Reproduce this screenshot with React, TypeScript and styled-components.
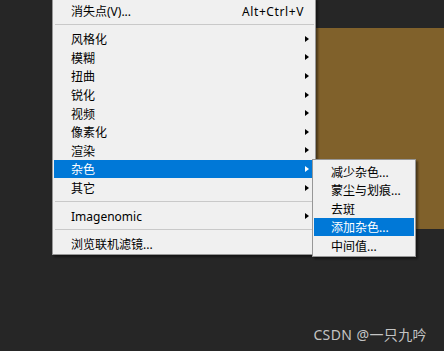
import React from "react";
import styled, { createGlobalStyle } from "styled-components";

const Global = createGlobalStyle`
  html, body { margin: 0; padding: 0; background: #262626; }
  body { width: 444px; height: 351px; overflow: hidden; }
`;

const Stage = styled.div`
  position: relative;
  width: 444px;
  height: 351px;
  background: #262626;
  overflow: hidden;
  font-family: "Noto Sans", "Noto Sans CJK SC", sans-serif;
  font-size: 12px;
  color: #000;
`;

const Canvas = styled.div`
  position: absolute;
  left: 316px;
  top: 28px;
  width: 128px;
  height: 201px;
  background: #80612b;
`;

const Menu = styled.div<{ $left: number; $top: number; $width: number; $z: number; $padTop: number }>`
  position: absolute;
  left: ${(p) => p.$left}px;
  top: ${(p) => p.$top}px;
  width: ${(p) => p.$width}px;
  box-sizing: border-box;
  background: #f0f0f0;
  border: 1px solid #979797;
  padding: ${(p) => p.$padTop}px 1px 1px;
  box-shadow: 2px 2px 2px rgba(0, 0, 0, 0.45);
  z-index: ${(p) => p.$z};
  display: flex;
  flex-direction: column;
`;

const Row = styled.div<{ $active?: boolean }>`
  box-sizing: border-box;
  height: 18.6px;
  display: flex;
  align-items: center;
  padding: 3px 5px 0 17px;
  background: ${(p) => (p.$active ? "#0078d7" : "transparent")};
  color: ${(p) => (p.$active ? "#fff" : "#000")};
  white-space: nowrap;
  line-height: 1;
`;

const Label = styled.span`
  flex: 1;
`;

const Shortcut = styled.span`
  margin-right: 5px;
  letter-spacing: 0.6px;
`;

const Arrow = styled.span<{ $active?: boolean }>`
  width: 0;
  height: 0;
  margin-top: -3px;
  border-top: 3.5px solid transparent;
  border-bottom: 3.5px solid transparent;
  border-left: 4px solid ${(p) => (p.$active ? "#fff" : "#000")};
`;

const Separator = styled.div`
  height: 1px;
  margin: 4px 0 4.5px 1px;
  background: #c9c9c9;
`;

const Watermark = styled.div`
  position: absolute;
  right: 17px;
  top: 325px;
  font-size: 14px;
  line-height: 20px;
  letter-spacing: 0.4px;
  color: #c4c4c4;
  font-family: "Noto Sans", "Noto Sans CJK SC", sans-serif;
  white-space: nowrap;
`;

const subItems = ["风格化", "模糊", "扭曲", "锐化", "视频", "像素化", "渲染", "杂色", "其它"];
const noiseItems = ["减少杂色...", "蒙尘与划痕...", "去斑", "添加杂色...", "中间值..."];

export default function App() {
  return (
    <Stage>
      <Global />
      <Canvas />
      <Menu $left={52} $top={-2} $width={264} $z={1} $padTop={2.4}>
        <Row>
          <Label>消失点(V)...</Label>
          <Shortcut>Alt+Ctrl+V</Shortcut>
        </Row>
        <Separator />
        {subItems.map((t) => (
          <Row key={t} $active={t === "杂色"}>
            <Label>{t}</Label>
            <Arrow $active={t === "杂色"} />
          </Row>
        ))}
        <Separator />
        <Row>
          <Label>Imagenomic</Label>
          <Arrow />
        </Row>
        <Separator />
        <Row>
          <Label>浏览联机滤镜...</Label>
        </Row>
      </Menu>
      <Menu $left={312} $top={159} $width={104} $z={2} $padTop={1.8}>
        {noiseItems.map((t) => (
          <Row key={t} $active={t === "添加杂色..."}>
            <Label>{t}</Label>
          </Row>
        ))}
      </Menu>
      <Watermark>CSDN @一只九吟</Watermark>
    </Stage>
  );
}
